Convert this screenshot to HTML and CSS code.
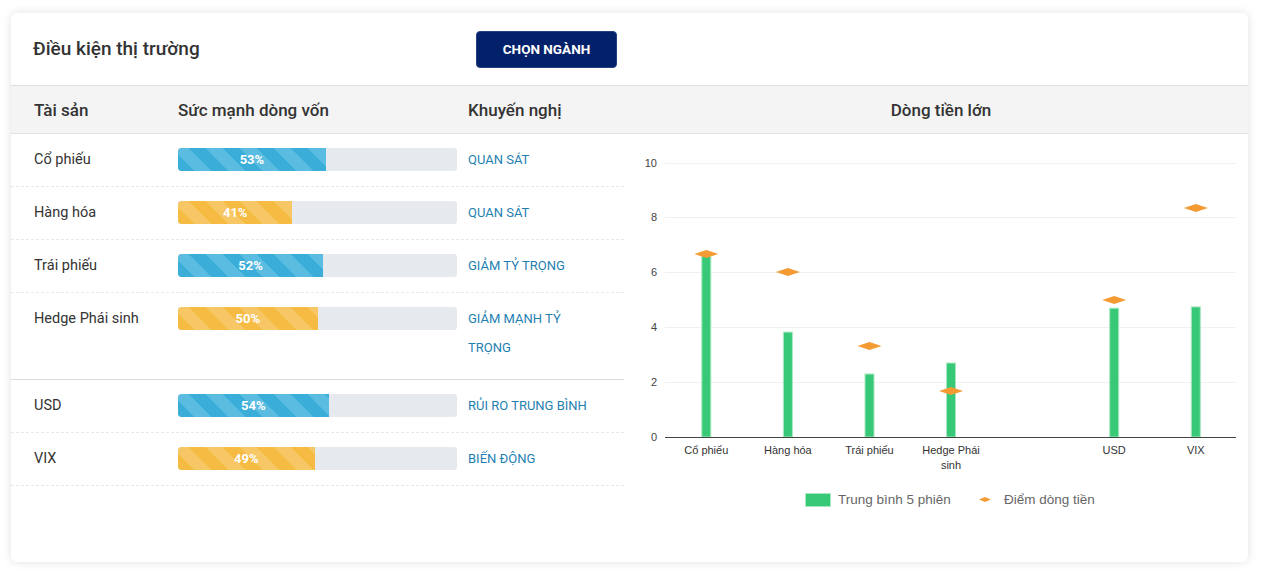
FILE: index.html
```html
<!DOCTYPE html>
<html lang="vi">
<head>
<meta charset="utf-8">
<title>Điều kiện thị trường</title>
<link rel="stylesheet" href="styles.css">
</head>
<body>
<div class="card">
  <div class="card-head">
    <h2 class="card-title">Điều kiện thị trường</h2>
    <button class="btn">CHỌN NGÀNH</button>
  </div>
  <div class="thead">
    <div class="tleft">
      <div class="c1">Tài sản</div>
      <div class="c2">Sức mạnh dòng vốn</div>
      <div class="c3">Khuyến nghị</div>
    </div>
    <div class="tright">Dòng tiền lớn</div>
  </div>
  <div class="tbody">
    <div class="assets">
      <div class="row">
        <div class="c1 name">Cổ phiếu</div>
        <div class="c2"><div class="bar"><div class="fill blue" style="width:53%">53%</div></div></div>
        <div class="c3 rec">QUAN SÁT</div>
      </div>
      <div class="row">
        <div class="c1 name">Hàng hóa</div>
        <div class="c2"><div class="bar"><div class="fill yellow" style="width:41%">41%</div></div></div>
        <div class="c3 rec">QUAN SÁT</div>
      </div>
      <div class="row">
        <div class="c1 name">Trái phiếu</div>
        <div class="c2"><div class="bar"><div class="fill blue" style="width:52%">52%</div></div></div>
        <div class="c3 rec">GIẢM TỶ TRỌNG</div>
      </div>
      <div class="row row-tall">
        <div class="c1 name">Hedge Phái sinh</div>
        <div class="c2"><div class="bar"><div class="fill yellow" style="width:50%">50%</div></div></div>
        <div class="c3 rec">GIẢM MẠNH TỶ TRỌNG</div>
      </div>
      <div class="row">
        <div class="c1 name">USD</div>
        <div class="c2"><div class="bar"><div class="fill blue" style="width:54%">54%</div></div></div>
        <div class="c3 rec">RỦI RO TRUNG BÌNH</div>
      </div>
      <div class="row">
        <div class="c1 name">VIX</div>
        <div class="c2"><div class="bar"><div class="fill yellow" style="width:49%">49%</div></div></div>
        <div class="c3 rec">BIẾN ĐỘNG</div>
      </div>
    </div>
    <div class="chart">
      <svg class="chart-svg" width="624" height="390" viewBox="0 0 624 390">
        <g class="grid">
          <line x1="41" y1="29.5" x2="612" y2="29.5"/>
          <line x1="41" y1="83.5" x2="612" y2="83.5"/>
          <line x1="41" y1="138.5" x2="612" y2="138.5"/>
          <line x1="41" y1="193.5" x2="612" y2="193.5"/>
          <line x1="41" y1="248.5" x2="612" y2="248.5"/>
        </g>
        <g class="yticks">
          <text x="33" y="33">10</text>
          <text x="33" y="87">8</text>
          <text x="33" y="142">6</text>
          <text x="33" y="197">4</text>
          <text x="33" y="252">2</text>
          <text x="33" y="307">0</text>
        </g>
        <g class="bars">
          <rect x="77.8" y="122.2" width="9" height="180.8"/>
          <rect x="159.4" y="198.1" width="9" height="104.9"/>
          <rect x="241" y="240" width="9" height="63"/>
          <rect x="322.5" y="229" width="9" height="74"/>
          <rect x="485.7" y="174.2" width="9" height="128.8"/>
          <rect x="567.3" y="172.9" width="9" height="130.1"/>
        </g>
        <line class="axis" x1="41" y1="303.5" x2="612" y2="303.5"/>
        <g class="points">
          <path d="M70.3 120 L82.3 116 L94.3 120 L82.3 124 Z"/>
          <path d="M151.9 138 L163.9 134 L175.9 138 L163.9 142 Z"/>
          <path d="M233.5 212 L245.5 208 L257.5 212 L245.5 216 Z"/>
          <path d="M315 257 L327 253 L339 257 L327 261 Z"/>
          <path d="M478.2 166 L490.2 162 L502.2 166 L490.2 170 Z"/>
          <path d="M559.8 74 L571.8 70 L583.8 74 L571.8 78 Z"/>
        </g>
        <g class="xticks">
          <text x="82.3" y="320">Cổ phiếu</text>
          <text x="163.9" y="320">Hàng hóa</text>
          <text x="245.5" y="320">Trái phiếu</text>
          <text x="327" y="320">Hedge Phái</text>
          <text x="327" y="335">sinh</text>
          <text x="490.2" y="320">USD</text>
          <text x="571.8" y="320">VIX</text>
        </g>
        <g class="legend">
          <rect class="legend-box" x="181.5" y="359.5" width="25" height="13"/>
          <text x="214" y="370">Trung bình 5 phiên</text>
          <path class="legend-point" d="M355 365.5 L361 363 L367 365.5 L361 368 Z"/>
          <text x="380" y="370">Điểm dòng tiền</text>
        </g>
      </svg>
    </div>
  </div>
</div>
</body>
</html>
```

FILE: styles.css
```css
* { box-sizing: border-box; }

body {
  margin: 0;
  padding: 13px 15px 9px 11px;
  background: #ffffff;
  font-family: Roboto, "Liberation Sans", Arial, sans-serif;
  color: #333333;
}

.card {
  width: 1237px;
  height: 549px;
  background: #ffffff;
  border-radius: 6px;
  box-shadow: 0 0 10px rgba(0, 0, 0, 0.12);
  overflow: hidden;
}

.card-head {
  height: 73px;
  display: flex;
  align-items: center;
  padding-left: 22px;
  border-bottom: 1px solid #dedede;
}

.card-title {
  margin: 0 0 1px;
  width: 443px;
  font-size: 19px;
  font-weight: 500;
  color: #333333;
}

.btn {
  width: 141px;
  height: 37px;
  background: #03216a;
  color: #ffffff;
  border: 1px solid #26407f;
  border-radius: 4px;
  font-family: Roboto, "Liberation Sans", sans-serif;
  font-size: 13.5px;
  font-weight: 700;
  padding: 0;
}

.thead {
  height: 48px;
  display: flex;
  align-items: center;
  background: #f4f4f4;
  border-bottom: 1px solid #e2e2e2;
  font-size: 17px;
  font-weight: 500;
  color: #333333;
}

.tleft {
  width: 613px;
  display: flex;
}

.tright {
  flex: 1;
  text-align: center;
  padding-left: 10px;
}

.c1 {
  width: 167px;
  padding-left: 23px;
  flex: none;
}

.c2 {
  width: 290px;
  flex: none;
}

.c3 {
  flex: 1;
}

.tbody {
  display: flex;
}

.assets {
  width: 613px;
  flex: none;
}

.row {
  height: 53px;
  display: flex;
  align-items: flex-start;
  padding-top: 11px;
  line-height: 29px;
  border-bottom: 1px dashed #e8e8e8;
}

.row-tall {
  height: 87px;
  border-bottom: 1px solid #dcdcdc;
}

.name {
  font-size: 14.5px;
  color: #333333;
}

.bar {
  margin-top: 3px;
  width: 279px;
  height: 23px;
  background: #e6e9ed;
  border-radius: 3px;
  overflow: hidden;
}

.fill {
  height: 23px;
  line-height: 23px;
  text-align: center;
  color: #ffffff;
  font-size: 13px;
  font-weight: 700;
  border-radius: 3px 0 0 3px;
}

.fill.blue {
  background: repeating-linear-gradient(45deg, #3aaed8 0 12px, #5bbce1 12px 24px);
}

.fill.yellow {
  background: repeating-linear-gradient(45deg, #f6bb42 0 12px, #f7c665 12px 24px);
}

.rec {
  flex: none;
  width: 122px;
  font-size: 13px;
  color: #1f7fb1;
}

.chart {
  flex: 1;
}

.chart-svg {
  display: block;
  font-family: "Liberation Sans", Arial, sans-serif;
}

.grid line {
  stroke: #eef0f4;
  stroke-width: 1;
}

.axis {
  stroke: #444444;
  stroke-width: 1;
}

.yticks text {
  font-size: 11px;
  fill: #444444;
  text-anchor: end;
}

.xticks text {
  font-size: 11px;
  fill: #333333;
  text-anchor: middle;
}

.bars rect {
  fill: #37c977;
  stroke: #a8e8c0;
  stroke-width: 1;
}

.points path {
  fill: #f49b33;
}

.legend text {
  font-size: 13.5px;
  fill: #666666;
}

.legend-box {
  fill: #37c977;
  stroke: #a8e8c0;
  stroke-width: 1;
}

.legend-point {
  fill: #f49b33;
}
```
